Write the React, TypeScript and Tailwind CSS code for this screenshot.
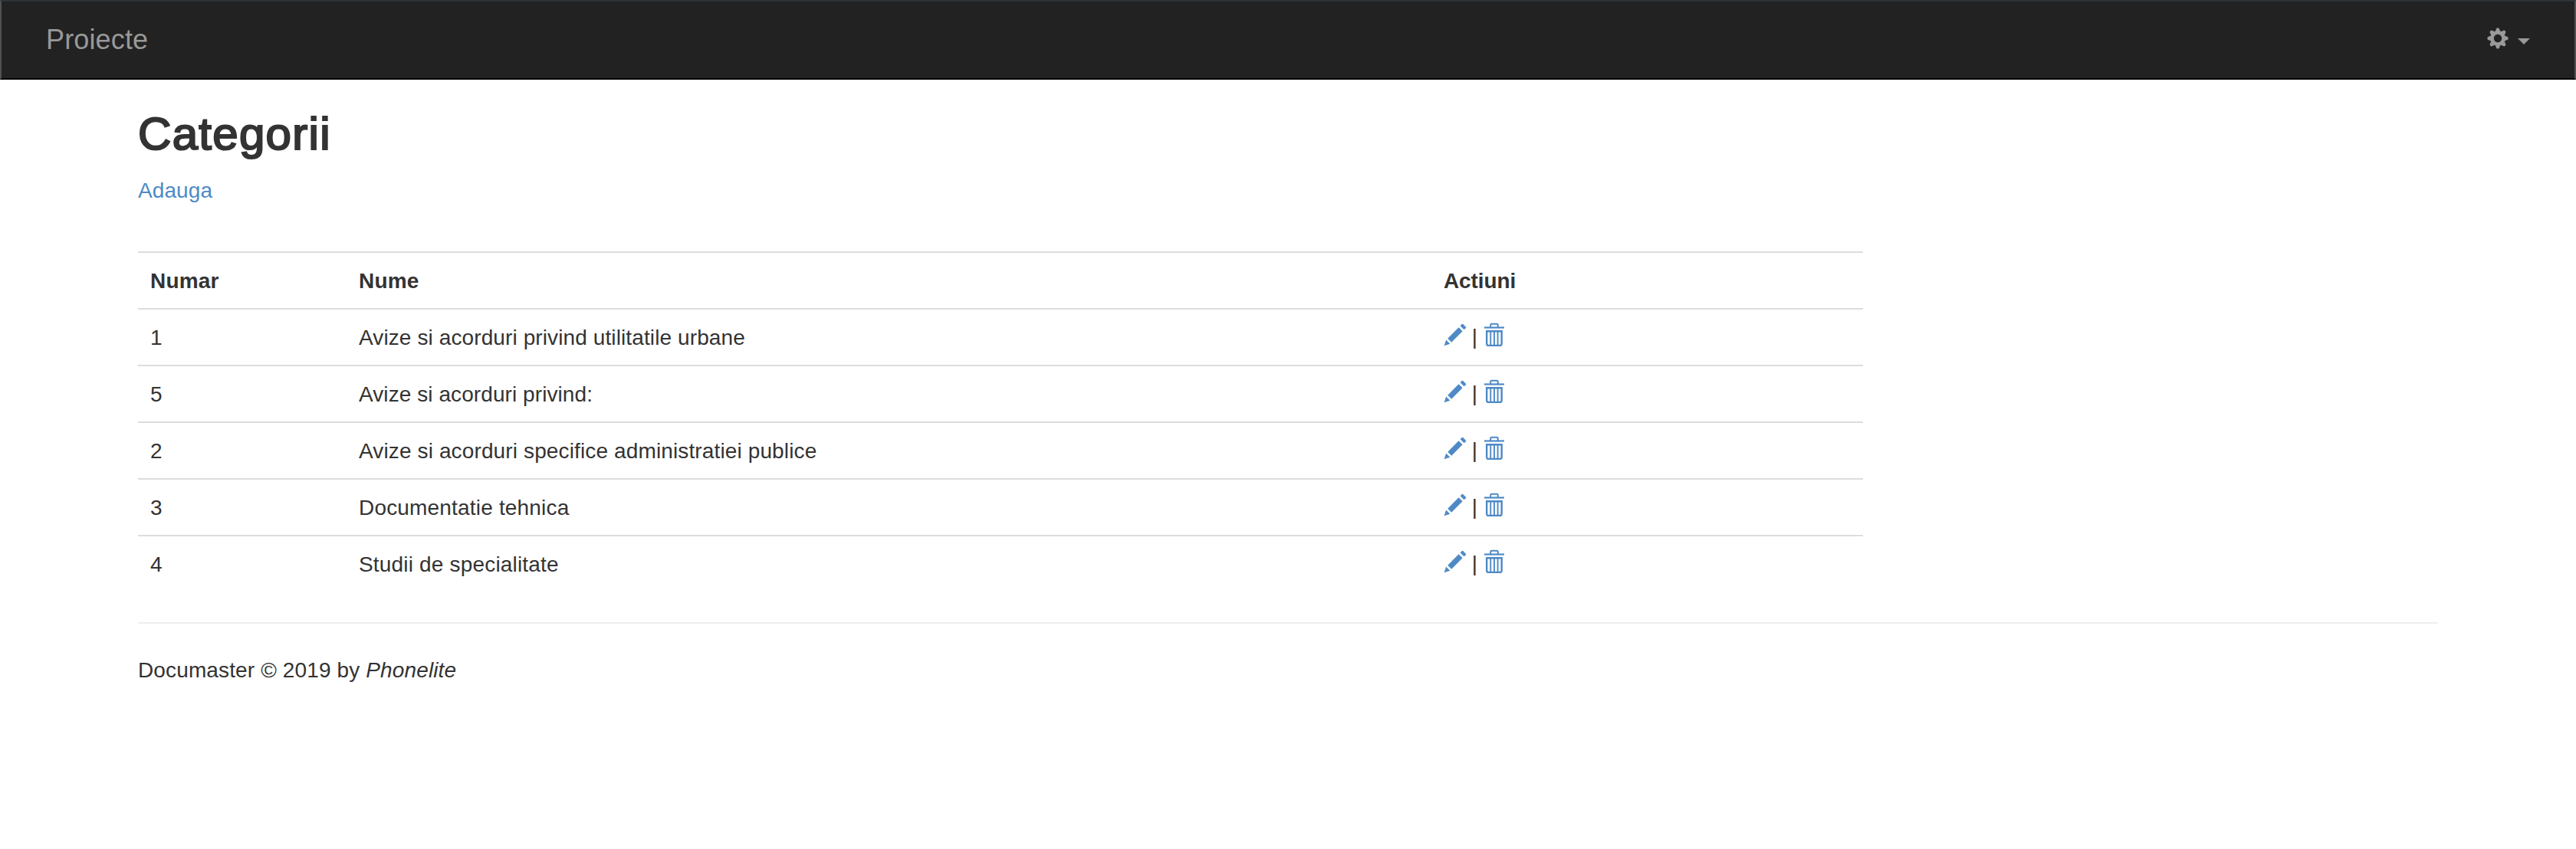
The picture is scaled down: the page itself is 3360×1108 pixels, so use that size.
const categories = [
  { numar: 1, nume: "Avize si acorduri privind utilitatile urbane", fit: "tracking-[0.11px]" },
  { numar: 5, nume: "Avize si acorduri privind:", fit: "tracking-[0.08px]" },
  { numar: 2, nume: "Avize si acorduri specifice administratiei publice", fit: "tracking-[0.13px]" },
  { numar: 3, nume: "Documentatie tehnica", fit: "tracking-[0.18px]" },
  { numar: 4, nume: "Studii de specialitate", fit: "tracking-[0.18px]" },
];

function CogIcon() {
  return (
    <svg width="28" height="28" viewBox="-14 -14 28 28" fill="currentColor" aria-hidden="true">
      <circle r="7.6" fill="none" stroke="currentColor" strokeWidth="4.8" />
      {[0, 45, 90, 135, 180, 225, 270, 315].map((angle) => (
        <path key={angle} d="M-3.3 -9L-1.9 -12.6Q-1.6 -13.5 -0.9 -13.5H0.9Q1.6 -13.5 1.9 -12.6L3.3 -9Z" transform={`rotate(${angle})`} />
      ))}
    </svg>
  );
}

function PencilIcon() {
  return (
    <svg className="overflow-visible" width="28" height="28" viewBox="0 0 1200 1200" fill="currentColor" aria-hidden="true">
      <path
        transform="matrix(1 0 0 -1 0 1200)"
        d="M1011 1210q19 0 33 -13l153 -153q13 -14 13 -33t-13 -33l-99 -92l-214 214l95 96q13 14 32 14zM1013 800l-615 -614l-214 214l614 614zM317 96l-333 -112l110 335z"
      />
    </svg>
  );
}

function TrashIcon() {
  return (
    <svg width="28" height="32" viewBox="0 0 28 32" fill="none" stroke="currentColor" aria-hidden="true">
      <path d="M1 7.5H27" strokeWidth="2.2" />
      <path d="M9.2 7V4.2Q9.2 2.8 10.6 2.8H17.4Q18.8 2.8 18.8 4.2V7" strokeWidth="2" />
      <path d="M4.2 12.2H23.7V28.6Q23.7 31 21.3 31H6.6Q4.2 31 4.2 28.6Z" strokeWidth="2.4" />
      <path d="M9.3 12V31M14 12V31M18.6 12V31" strokeWidth="1.9" />
    </svg>
  );
}

export default function App() {
  return (
    <div className="min-h-[1108px] bg-white font-['Liberation_Sans',Arial,sans-serif] text-[28px] leading-[40px] text-[#333]">
      <nav className="flex h-[104px] items-center justify-between border-2 border-t-[#2d3236] border-r-[#505050] border-b-[#060606] border-l-[#505050] bg-[#222] px-[58px] text-[#999]">
        <a className="text-[36px] tracking-[0.15px]">Proiecte</a>
        <button className="mb-[4px] flex items-center gap-[12px]" aria-label="Setari">
          <CogIcon />
          <span className="mt-[8px] border-x-8 border-t-8 border-x-transparent border-t-current" />
        </button>
      </nav>

      <main className="mx-[180px] pt-[38px]">
        <h2 className="text-[60px] leading-[66px] tracking-[1.3px] [-webkit-text-stroke:2.2px_#333]">Categorii</h2>
        <p className="mt-[21px]">
          <a className="tracking-[0.1px] text-[#4f8ac6]">Adauga</a>
        </p>

        <table className="mt-[59px] w-[2250px] table-fixed border-collapse text-left">
          <colgroup>
            <col className="w-[272px]" />
            <col className="w-[1416px]" />
            <col />
          </colgroup>
          <thead>
            <tr className="h-[74px] shadow-[inset_0_2px_#ddd]">
              <th className="px-[16px] pt-[4px] tracking-[0.2px]">Numar</th>
              <th className="px-[16px] pt-[4px] tracking-[0.2px]">Nume</th>
              <th className="px-[15px] pt-[4px] tracking-[-0.1px]">Actiuni</th>
            </tr>
          </thead>
          <tbody>
            {categories.map((c) => (
              <tr key={c.numar} className="h-[74px] shadow-[inset_0_2px_#ddd]">
                <td className="px-[16px] pt-[4px]">{c.numar}</td>
                <td className={`px-[16px] pt-[4px] ${c.fit}`}>{c.nume}</td>
                <td className="px-[16px] pt-[2px]">
                  <div className="flex h-[40px] text-[#4f8ac6]">
                    <a className="pt-[3px]" aria-label="Editeaza"><PencilIcon /></a>
                    <span className="whitespace-pre text-[#333]"> | </span>
                    <a aria-label="Sterge"><TrashIcon /></a>
                  </div>
                </td>
              </tr>
            ))}
          </tbody>
        </table>

        <hr className="mt-[40px] mb-[41px] border-t-2 border-[#eee]" />
        <footer className="tracking-[0.13px]">
          Documaster © 2019 by <em>Phonelite</em>
        </footer>
      </main>
    </div>
  );
}
